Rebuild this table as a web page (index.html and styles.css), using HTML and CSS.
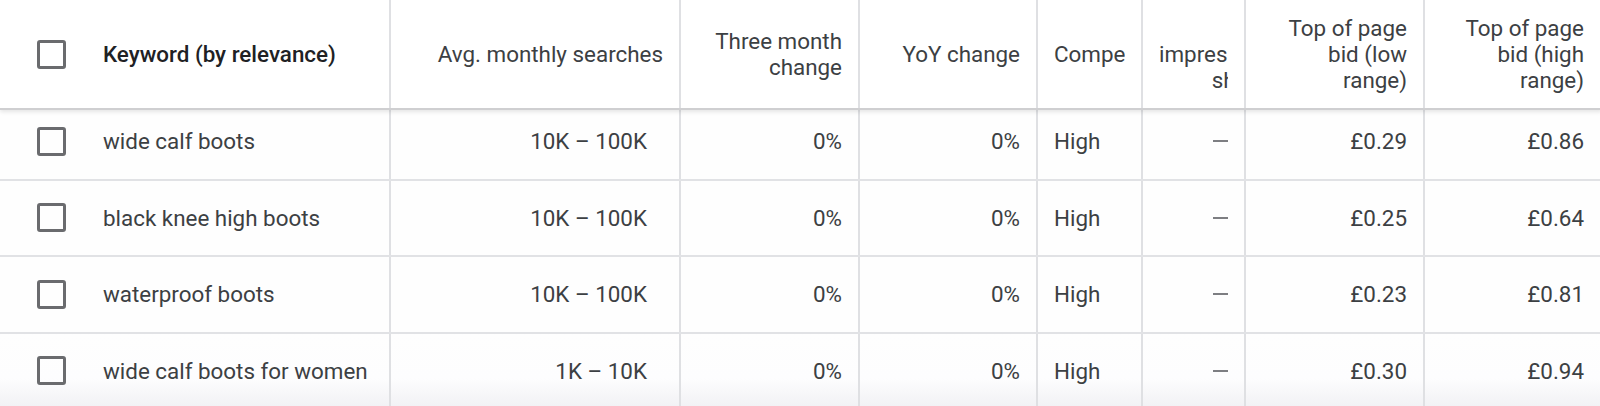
FILE: index.html
```html
<!DOCTYPE html>
<html>
<head>
<meta charset="utf-8">
<link rel="stylesheet" href="styles.css">
</head>
<body>
<div class="table">
  <div class="head">
    <div class="cell c1"><span class="cb"></span><span class="kw-head">Keyword (by relevance)</span></div>
    <div class="cell c2 right"><span class="htxt">Avg. monthly searches</span></div>
    <div class="cell c3 right"><span class="htxt">Three month<br>change</span></div>
    <div class="cell c4 right"><span class="htxt">YoY change</span></div>
    <div class="cell c5"><div class="clip"><span class="htxt nowrap">Competition</span></div></div>
    <div class="cell c6"><div class="clip"><div class="htxt wide">Ad<br>impression<br>share</div></div></div>
    <div class="cell c7 right"><span class="htxt">Top of page<br>bid (low<br>range)</span></div>
    <div class="cell c8 right"><span class="htxt">Top of page<br>bid (high<br>range)</span></div>
  </div>
  <div class="body">
    <div class="row">
      <div class="cell c1"><span class="cb"></span><span>wide calf boots</span></div>
      <div class="cell c2 right pad2">10K – 100K</div>
      <div class="cell c3 right">0%</div>
      <div class="cell c4 right">0%</div>
      <div class="cell c5">High</div>
      <div class="cell c6 right"><span class="dash"></span></div>
      <div class="cell c7 right">£0.29</div>
      <div class="cell c8 right">£0.86</div>
    </div>
    <div class="row">
      <div class="cell c1"><span class="cb"></span><span>black knee high boots</span></div>
      <div class="cell c2 right pad2">10K – 100K</div>
      <div class="cell c3 right">0%</div>
      <div class="cell c4 right">0%</div>
      <div class="cell c5">High</div>
      <div class="cell c6 right"><span class="dash"></span></div>
      <div class="cell c7 right">£0.25</div>
      <div class="cell c8 right">£0.64</div>
    </div>
    <div class="row">
      <div class="cell c1"><span class="cb"></span><span>waterproof boots</span></div>
      <div class="cell c2 right pad2">10K – 100K</div>
      <div class="cell c3 right">0%</div>
      <div class="cell c4 right">0%</div>
      <div class="cell c5">High</div>
      <div class="cell c6 right"><span class="dash"></span></div>
      <div class="cell c7 right">£0.23</div>
      <div class="cell c8 right">£0.81</div>
    </div>
    <div class="row last">
      <div class="cell c1"><span class="cb"></span><span>wide calf boots for women</span></div>
      <div class="cell c2 right pad2">1K – 10K</div>
      <div class="cell c3 right">0%</div>
      <div class="cell c4 right">0%</div>
      <div class="cell c5">High</div>
      <div class="cell c6 right"><span class="dash"></span></div>
      <div class="cell c7 right">£0.30</div>
      <div class="cell c8 right">£0.94</div>
    </div>
  </div>
</div>
</body>
</html>
```
FILE: styles.css
```css
html, body {
  margin: 0;
  padding: 0;
  background: #ffffff;
  overflow: hidden;
}
.table {
  width: 1602px;
  font-family: Roboto, "Liberation Sans", sans-serif;
  font-size: 22.4px;
  color: #3c4043;
}
.head {
  display: flex;
  height: 110px;
  box-sizing: border-box;
  border-bottom: 2px solid #cfcfd1;
  background: #ffffff;
  position: relative;
  z-index: 2;
  box-shadow: 0 2px 4px rgba(0, 0, 0, 0.10);
}
.body {
  margin-top: -6px;
}
.row {
  display: flex;
  height: 76.5px;
  box-sizing: border-box;
  border-bottom: 2px solid #e1e2e5;
  background: #fefefe;
}
.row.last {
  background: linear-gradient(to bottom, #fefefe 0%, #fdfdfe 60%, #f1f1f4 100%);
}
.cell {
  box-sizing: border-box;
  border-right: 2px solid #dfe0e3;
  padding: 0 16px;
  display: flex;
  align-items: center;
  line-height: 26px;
  white-space: nowrap;
  min-width: 0;
}
.right {
  justify-content: flex-end;
  text-align: right;
}
.c1 { width: 391px; padding-left: 37px; gap: 37px; }
.c2 { width: 290px; }
.c3 { width: 179px; }
.c4 { width: 178px; }
.c5 { width: 105px; padding-right: 16px; }
.c6 { width: 103px; }
.c7 { width: 179px; }
.c8 { width: 177px; }
.pad2 { padding-right: 32px; }
.htxt {
  white-space: nowrap;
}
.kw-head {
  font-weight: 500;
  color: #202124;
}
.clip {
  overflow: hidden;
  width: 100%;
  display: flex;
  align-items: center;
}
.wide {
  flex: none;
  width: 108px;
  text-align: right;
}
.cb {
  flex: none;
  width: 29px;
  height: 29px;
  box-sizing: border-box;
  border: 3px solid #6a6b6e;
  border-radius: 3px;
}
.dash {
  display: block;
  width: 15px;
  height: 2px;
  background: #7d7e82;
}
```
